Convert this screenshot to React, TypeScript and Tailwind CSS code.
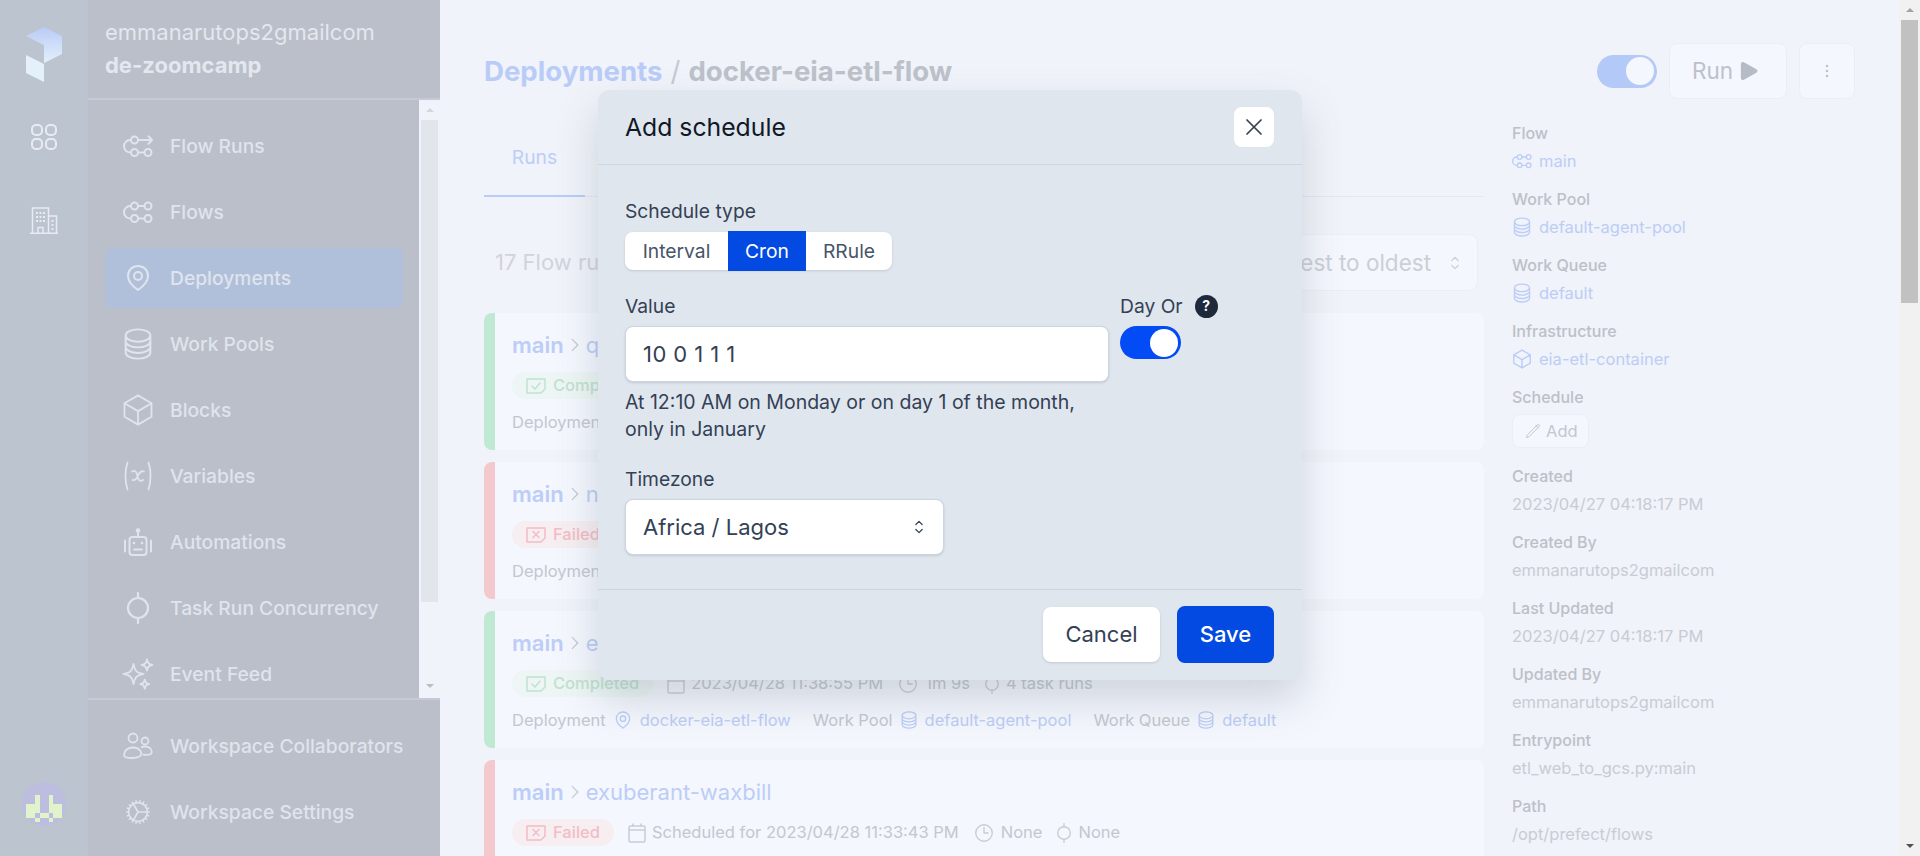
import type { ReactNode } from 'react';
import {
  HiOutlineCircleStack,
  HiOutlineCube,
  HiOutlineSparkles,
  HiOutlineCog,
  HiOutlineClock,
  HiOutlinePencil,
  HiOutlineXMark,
  HiOutlineChevronUpDown,
  HiOutlineChevronRight,
  HiPlay,
  HiEllipsisVertical,
} from 'react-icons/hi2';

type IconProps = { className?: string };

function FlowIcon({ className, run }: IconProps & { run?: boolean }) {
  return (
    <svg viewBox="0 0 30 24" fill="none" stroke="currentColor" strokeWidth="2" strokeLinecap="round" strokeLinejoin="round" className={className}>
      <circle cx="11.500" cy="6" r="3.500" />
      <circle cx="11.500" cy="18.500" r="3.500" />
      <circle cx="25" cy="18.500" r="3.500" />
      {run ? (
        <path d="M15 6h14M25.500 2.200 29 6l-3.500 3.800" />
      ) : (
        <>
          <circle cx="25" cy="6" r="3.500" />
          <path d="M15 6h6.500" />
        </>
      )}
      <path d="M15 18.500h6.500M8 6H7a6 6.250 0 0 0 0 12.500h1" />
    </svg>
  );
}

function PinIcon({ className }: IconProps) {
  return (
    <svg viewBox="0 0 24 28" fill="none" stroke="currentColor" strokeWidth="2" strokeLinejoin="round" className={className}>
      <path d="M12 2C6.200 2 2 6.200 2 12c0 5.500 5 10.500 10 14 5-3.500 10-8.500 10-14 0-5.800-4.200-10-10-10Z" />
      <circle cx="12" cy="12" r="4" />
    </svg>
  );
}

function VariableIcon({ className }: IconProps) {
  return (
    <svg viewBox="0 0 30 30" fill="none" stroke="currentColor" strokeWidth="1.800" strokeLinecap="round" className={className}>
      <path d="M4.500 1.500C1.800 9 1.800 21 4.500 28.500M25.500 1.500C28.200 9 28.200 21 25.500 28.500" />
      <path d="M9 10.500c2.500-1.500 4-.5 4.700 2l1.500 5c.7 2.400 2.300 3 5 1.500M21 10.500c-2.200-.8-4 0-5.500 3l-1.500 3c-1.300 2.600-2.800 3.200-4.500 2.500" />
    </svg>
  );
}

function RobotIcon({ className }: IconProps) {
  return (
    <svg viewBox="0 0 28 28" fill="none" stroke="currentColor" strokeWidth="2" strokeLinecap="round" strokeLinejoin="round" className={className}>
      <circle cx="14" cy="2.500" r="2.300" fill="currentColor" stroke="none" />
      <path d="M14 4v5" />
      <rect x="5.500" y="9" width="17" height="18" rx="3" />
      <path d="M1 12.500v11M27 12.500v11M10 21.500h8" />
      <circle cx="10" cy="15" r="1.300" fill="currentColor" stroke="none" />
      <circle cx="18" cy="15" r="1.300" fill="currentColor" stroke="none" />
    </svg>
  );
}

function ConcurrencyIcon({ className }: IconProps) {
  return (
    <svg viewBox="0 0 24 32" fill="none" stroke="currentColor" strokeWidth="2.200" strokeLinecap="round" className={className}>
      <circle cx="12" cy="16" r="10" />
      <path d="M12 1v5M12 26v5" />
    </svg>
  );
}

function UsersIcon({ className }: IconProps) {
  return (
    <svg viewBox="0 0 30 28" fill="none" stroke="currentColor" strokeWidth="1.800" strokeLinejoin="round" className={className}>
      <circle cx="10" cy="6" r="4.500" />
      <circle cx="22" cy="9" r="3.500" />
      <path d="M1 23c0-4.500 4-7.500 9-7.500 3.500 0 6 1.200 7.500 3.500 1 1.500 1 4.500-1 5.500-2 1-5 1.500-7.500 1.500C4 26 1 25.500 1 23Z" />
      <path d="M18 15.500c1.300-.8 2.700-1 4-1 3.800 0 6.800 2.200 6.800 5.500 0 2-2.300 2.800-5 2.800-1.300 0-2.800-.1-4.300-.5" />
    </svg>
  );
}

function BuildingIcon({ className }: IconProps) {
  return (
    <svg viewBox="0 0 28 27" fill="none" stroke="currentColor" strokeWidth="1.500" className={className}>
      <path d="M0 26.200h28M2.500 26V1h16v25M18.500 9h8v17" />
      <path d="M8 26v-5.500h5V26" />
      <g fill="currentColor" stroke="none">
        <rect x="6" y="5" width="2" height="2" />
        <rect x="9.500" y="5" width="2" height="2" />
        <rect x="13" y="5" width="2" height="2" />
        <rect x="6" y="9" width="2" height="2" />
        <rect x="9.500" y="9" width="2" height="2" />
        <rect x="13" y="9" width="2" height="2" />
        <rect x="6" y="13" width="2" height="2" />
        <rect x="9.500" y="13" width="2" height="2" />
        <rect x="13" y="13" width="2" height="2" />
        <rect x="21.500" y="13" width="2" height="2" />
        <rect x="21.500" y="17" width="2" height="2" />
        <rect x="21.500" y="21" width="2" height="2" />
      </g>
    </svg>
  );
}

function CalendarIcon({ className }: IconProps) {
  return (
    <svg viewBox="0 0 18 20" fill="none" stroke="currentColor" strokeWidth="1.500" strokeLinecap="round" className={className}>
      <rect x="1" y="3" width="16" height="16" rx="1.500" />
      <path d="M1 7h16M5 1v2M13 1v2" />
    </svg>
  );
}

function BadgeIcon({ className, failed }: IconProps & { failed?: boolean }) {
  return (
    <svg viewBox="0 0 20 16" fill="none" stroke="currentColor" strokeWidth="1.500" strokeLinecap="round" strokeLinejoin="round" className={className}>
      <path d="M1 1h18v10l-4 4H1Z" />
      {failed ? <path d="m7 4.500 6 6M13 4.500l-6 6" /> : <path d="m6 8 3 3 5-6" />}
    </svg>
  );
}

function Logo() {
  return (
    <svg viewBox="0 0 36 56" className="w-9 h-14">
      <defs>
        <linearGradient id="logoTop" x1="0" y1="0" x2="0" y2="1">
          <stop offset="0" stopColor="#b9cbf7" />
          <stop offset="1" stopColor="#e4f0fb" />
        </linearGradient>
      </defs>
      <polygon points="0,9 18,0 36,9 36,27 18,36 18,18" fill="url(#logoTop)" />
      <polygon points="0,28 18,37 18,55 0,46" fill="#e4f1fb" />
    </svg>
  );
}

const avatarCells = [
  [2, 0], [5, 0], [2, 1], [5, 1],
  [0, 2], [1, 2], [2, 2], [5, 2], [6, 2], [7, 2],
  [0, 3], [1, 3], [2, 3], [5, 3], [6, 3], [7, 3],
  [0, 4], [1, 4], [3, 4], [4, 4], [6, 4], [7, 4],
  [2, 5], [5, 5],
];

function Avatar() {
  return (
    <div className="w-11 h-11 rounded-full bg-[#bcbddf] flex justify-center pt-[13px]">
      <svg viewBox="0 0 8 6" className="w-9 h-[27px]" shapeRendering="crispEdges">
        {avatarCells.map(([x, y]) => (
          <rect key={`${x}-${y}`} x={x} y={y} width="1" height="1" fill="#e0f3cb" />
        ))}
      </svg>
    </div>
  );
}

function NavItem({ icon, label, active }: { icon: ReactNode; label: string; active?: boolean }) {
  return (
    <div className={`flex flex-none items-center h-[60px] rounded-lg pl-[18px] ${active ? 'bg-[#b1c0da]' : ''}`}>
      <span className="w-[30px] h-[30px] flex items-center justify-center text-[#dfe4ed]">{icon}</span>
      <span className="ml-[17px] text-[19.25px] leading-7 font-medium text-[#dfe4ed] whitespace-nowrap">{label}</span>
    </div>
  );
}

function Sidebar() {
  return (
    <div className="flex flex-none w-[440px] h-full">
      <div className="w-[88px] flex flex-col items-center bg-[#bcc4d0]">
        <div className="mt-[27px]"><Logo /></div>
        <svg viewBox="0 0 26 26" fill="none" stroke="#e8ecf2" strokeWidth="2" className="w-[26px] h-[26px] mt-[41px]">
          <rect x="1" y="1" width="10" height="10" rx="4" />
          <rect x="15" y="1" width="10" height="10" rx="4" />
          <rect x="1" y="15" width="10" height="10" rx="4" />
          <rect x="15" y="15" width="10" height="10" rx="4" />
        </svg>
        <BuildingIcon className="w-7 h-[27px] mt-[57px] text-[#e8ecf2]" />
        <div className="mt-auto mb-[30px]"><Avatar /></div>
      </div>
      <div className="flex-1 flex flex-col bg-[#bbbfc9] min-w-0">
        <div className="h-[100px] flex-none border-b-2 border-[#c5cad6] pl-[17px] pt-[16px]">
          <div className="text-[22px] leading-[33px] text-[#e3e7ef]">emmanarutops2gmailcom</div>
          <div className="text-[22px] leading-[33px] font-bold text-[#e3e7ef]">de-zoomcamp</div>
        </div>
        <div className="flex flex-1 min-h-0 overflow-hidden">
          <div className="flex-1 flex flex-col gap-[6px] pl-[17px] pr-4 pt-[16px] overflow-hidden">
            <NavItem icon={<FlowIcon run className="w-[30px] h-6" />} label="Flow Runs" />
            <NavItem icon={<FlowIcon className="w-[30px] h-6" />} label="Flows" />
            <NavItem active icon={<PinIcon className="w-6 h-7" />} label="Deployments" />
            <NavItem icon={<HiOutlineCircleStack className="flex-none w-9 h-9 stroke-[1.300]" />} label="Work Pools" />
            <NavItem icon={<HiOutlineCube className="flex-none w-9 h-9 stroke-[1.200]" />} label="Blocks" />
            <NavItem icon={<VariableIcon className="w-[30px] h-[30px]" />} label="Variables" />
            <NavItem icon={<RobotIcon className="w-7 h-7" />} label="Automations" />
            <NavItem icon={<ConcurrencyIcon className="w-6 h-8" />} label="Task Run Concurrency" />
            <NavItem icon={<HiOutlineSparkles className="flex-none w-9 h-9 stroke-[1.200]" />} label="Event Feed" />
          </div>
          <div className="w-[21px] flex-none flex flex-col items-center bg-[#f0f3f9]">
            <div className="h-[20px] flex items-center justify-center">
              <div className="border-x-[4px] border-b-[4px] border-x-transparent border-b-[#d3d7dd]" />
            </div>
            <div className="w-[17px] h-[482px] bg-[#e1e5ec]" />
            <div className="mt-auto h-[14px] flex items-start justify-center">
              <div className="border-x-[4px] border-t-[4px] border-x-transparent border-t-[#b9bec6]" />
            </div>
          </div>
        </div>
        <div className="h-[158px] flex-none border-t-2 border-[#c5cad6] pl-[17px] pr-4 pt-[16px] flex flex-col gap-[6px]">
          <NavItem icon={<UsersIcon className="w-[30px] h-7" />} label="Workspace Collaborators" />
          <NavItem icon={<HiOutlineCog className="w-8 h-8 stroke-[1.300]" />} label="Workspace Settings" />
        </div>
      </div>
    </div>
  );
}

function Meta({ icon, text }: { icon: ReactNode; text: string }) {
  return (
    <span className="flex items-center gap-[6px] text-[16.5px] text-[#c3c7cf] whitespace-nowrap">
      <span className="text-[#c9cdd5]">{icon}</span>
      {text}
    </span>
  );
}

function RunCard({ name, failed, time, duration, tasks }: { name: string; failed?: boolean; time: string; duration: string; tasks: string }) {
  return (
    <div className="flex h-[137px] flex-none rounded-lg overflow-hidden bg-[#f4f7fd]">
      <div className={`w-[11px] flex-none ${failed ? 'bg-[#f4c9cd]' : 'bg-[#bfe9d3]'}`} />
      <div className="pl-[17px] pt-[18px]">
        <div className="flex items-center h-7 text-[22px] leading-7 text-[#bccdf7] whitespace-nowrap">
          <span className="font-semibold">main</span>
          <HiOutlineChevronRight className="w-[18px] h-[22px] mx-[2px] text-[#c3c7cf]" />
          <span>{name}</span>
        </div>
        <div className="flex items-center mt-[13px] gap-[14px]">
          <span className={`flex items-center h-[27px] rounded-full pl-[14px] pr-[14px] gap-[7px] text-[16.5px] font-medium ${failed ? 'bg-[#f6eef0] text-[#f4bcc6]' : 'bg-[#edf6f4] text-[#bfe3cf]'}`}>
            <BadgeIcon failed={failed} className="w-5 h-4" />
            {failed ? 'Failed' : 'Completed'}
          </span>
          <Meta icon={<CalendarIcon className="w-[18px] h-5" />} text={time} />
          <Meta icon={<HiOutlineClock className="w-[22px] h-[22px]" />} text={duration} />
          <Meta icon={<ConcurrencyIcon className="w-4 h-5" />} text={tasks} />
        </div>
        <div className="flex items-center mt-[11px] text-[16.5px] text-[#c3c7cf] whitespace-nowrap">
          <span>Deployment</span>
          <PinIcon className="w-4 h-5 mx-[9px] text-[#bccdf7]" />
          <span className="text-[#bccdf7]">docker-eia-etl-flow</span>
          <span className="ml-[22px]">Work Pool</span>
          <HiOutlineCircleStack className="w-5 h-5 mx-[6px] text-[#bccdf7]" />
          <span className="text-[#bccdf7]">default-agent-pool</span>
          <span className="ml-[22px]">Work Queue</span>
          <HiOutlineCircleStack className="w-5 h-5 mx-[6px] text-[#bccdf7]" />
          <span className="text-[#bccdf7]">default</span>
        </div>
      </div>
    </div>
  );
}

function DetailItem({ label, children }: { label: string; children: ReactNode }) {
  return (
    <div className="h-[66px] flex-none">
      <div className="text-base leading-7 font-medium text-[#bcc0c8]">{label}</div>
      <div className="text-[16.5px] leading-7 text-[#c8ccd4] whitespace-nowrap">{children}</div>
    </div>
  );
}

function LinkValue({ icon, text }: { icon: ReactNode; text: string }) {
  return (
    <span className="flex items-center gap-[7px] text-[#bccdf7]">
      <span className="w-5 flex justify-center">{icon}</span>
      {text}
    </span>
  );
}

function Details() {
  return (
    <div className="w-[387px] flex-none pl-7 pr-4 pt-[26px] flex flex-col">
      <div className="flex-none flex items-center justify-end w-[343px] h-14 -mt-[26px] mb-[20px] gap-3">
        <div className="w-[60px] h-[33px] rounded-full bg-[#b3c9f8] flex items-center justify-end pr-[3px]">
          <div className="w-7 h-7 rounded-full bg-[#f4f7fd]" />
        </div>
        <div className="w-[118px] h-14 rounded-lg border border-[#ebeef4] bg-[#f4f7fd] flex items-center pl-[22px] gap-[3px] text-[22.5px] text-[#bcc1ca]">
          Run <HiPlay className="w-[26px] h-[26px] text-[#b6bcc6]" />
        </div>
        <div className="w-[56px] h-14 rounded-lg border border-[#ebeef4] bg-[#f4f7fd] flex items-center justify-center">
          <HiEllipsisVertical className="w-5 h-5 text-[#bcc1ca]" />
        </div>
      </div>
      <DetailItem label="Flow"><LinkValue icon={<FlowIcon className="w-5 h-4" />} text="main" /></DetailItem>
      <DetailItem label="Work Pool"><LinkValue icon={<HiOutlineCircleStack className="flex-none w-[22px] h-[22px]" />} text="default-agent-pool" /></DetailItem>
      <DetailItem label="Work Queue"><LinkValue icon={<HiOutlineCircleStack className="flex-none w-[22px] h-[22px]" />} text="default" /></DetailItem>
      <DetailItem label="Infrastructure"><LinkValue icon={<HiOutlineCube className="flex-none w-[22px] h-[22px]" />} text="eia-etl-container" /></DetailItem>
      <div className="h-[79px] flex-none">
        <div className="text-base leading-7 font-medium text-[#bcc0c8]">Schedule</div>
        <div className="flex items-center mt-[3px] w-[77px] h-[34px] rounded-lg border border-[#ebeef4] bg-[#f4f7fd] pl-3 gap-[5px] text-[16.5px] text-[#c3c7cf]">
          <HiOutlinePencil className="w-4 h-4" /> Add
        </div>
      </div>
      <DetailItem label="Created">2023/04/27 04:18:17 PM</DetailItem>
      <DetailItem label="Created By">emmanarutops2gmailcom</DetailItem>
      <DetailItem label="Last Updated">2023/04/27 04:18:17 PM</DetailItem>
      <DetailItem label="Updated By">emmanarutops2gmailcom</DetailItem>
      <DetailItem label="Entrypoint">etl_web_to_gcs.py:main</DetailItem>
      <DetailItem label="Path">/opt/prefect/flows</DetailItem>
    </div>
  );
}

function ScheduleModal() {
  return (
    <div className="absolute left-[598px] top-[90px] w-[704px] h-[590px] rounded-xl bg-[#e0e6ee] shadow-[0_20px_40px_rgba(100,110,130,0.25)] flex flex-col text-[#334155]">
      <div className="h-[75px] flex-none border-b border-[#cbd5e3] flex items-center justify-between pl-[27px] pr-7">
        <h2 className="text-[24.75px] pt-[2px] text-[#111827]">Add schedule</h2>
        <button className="w-10 h-10 rounded-lg bg-white flex items-center justify-center text-[#374151]">
          <HiOutlineXMark className="w-7 h-7" />
        </button>
      </div>
      <div className="flex-1 pl-[27px] pr-7 pt-[33px]">
        <div className="text-[19.25px] leading-[26px]">Schedule type</div>
        <div className="flex mt-[8px] h-[38px] w-[267px] rounded-lg bg-white shadow-sm text-[19.25px] leading-[36px] text-[#475569]">
          <span className="w-[103px] flex items-center justify-center">Interval</span>
          <span className="w-[78px] -my-px flex items-center justify-center bg-[#024ae2] text-white">Cron</span>
          <span className="w-[86px] flex items-center justify-center">RRule</span>
        </div>
        <div className="flex mt-[23px] gap-[11px]">
          <div className="w-[484px]">
            <div className="text-[19.25px] leading-[26px]">Value</div>
            <div className="mt-[7px] h-[56px] rounded-lg bg-white border border-[#cbd5e3] shadow-sm flex items-center pl-[17px] text-[22px] tracking-[0.02em] text-[#334155]">10 0 1 1 1</div>
            <p className="mt-[7px] text-[19.5px] leading-[27px]">At 12:10 AM on Monday or on day 1 of the month, only in January</p>
          </div>
          <div>
            <div className="flex items-center h-[26px] text-[19.25px]">
              Day Or
              <span className="ml-3 w-[23px] h-[23px] rounded-full bg-[#1e293b] text-white text-sm font-bold flex items-center justify-center">?</span>
            </div>
            <div className="mt-[7px] w-[61px] h-[33px] rounded-full bg-[#024bf5] flex items-center justify-end pr-[3px]">
              <div className="w-7 h-7 rounded-full bg-white" />
            </div>
          </div>
        </div>
        <div className="mt-[23px] text-[19.25px] leading-[26px]">Timezone</div>
        <div className="mt-[7px] w-[319px] h-[56px] rounded-lg bg-white border border-[#cbd5e3] shadow-sm flex items-center justify-between pl-[17px] pr-[14px] text-[22px] text-[#334155]">
          Africa / Lagos
          <HiOutlineChevronUpDown className="w-5 h-5" />
        </div>
      </div>
      <div className="h-[91px] flex-none border-t border-[#cbd5e3] flex items-start justify-end gap-[17px] pr-7 pt-[16px]">
        <button className="w-[117px] h-[55px] mt-px rounded-lg bg-white shadow-sm text-[22px] text-[#334155]">Cancel</button>
        <button className="w-[97px] h-[57px] rounded-lg bg-[#024ae2] text-[22px] font-medium text-white">Save</button>
      </div>
    </div>
  );
}

export default function App() {
  return (
    <div className="relative flex w-[1920px] h-[856px] overflow-hidden bg-[#f0f3f9] font-[Inter,sans-serif]">
      <Sidebar />
      <div className="flex-none w-[1459px] flex pl-11 pt-[43px]">
        <div className="w-[1000px] flex-none flex flex-col">
          <div className="h-14 flex-none flex items-center pt-px text-[27.6px] font-bold whitespace-nowrap">
            <span className="text-[#b9ccf8]">Deployments</span>
            <span className="mx-2 font-normal text-[#c4c9d2]">/</span>
            <span className="text-[#bcc1ca]">docker-eia-etl-flow</span>
          </div>
          <div className="mt-[19px] h-[79px] flex-none border-b border-[#e4e8ef] flex items-end">
            <div className="w-[101px] h-[79px] -mb-px pt-[2px] border-b-2 border-[#b9ccf8] flex items-center justify-center text-[19.25px] text-[#bccdf7]">Runs</div>
          </div>
          <div className="mt-[37px] h-[57px] flex-none flex items-center justify-between pl-[11px]">
            <span className="text-[22px] text-[#d0d4db]">17 Flow runs</span>
            <div className="h-[57px] w-[290px] mr-[6px] rounded-lg border border-[#ebeef4] bg-[#f4f7fd] flex items-center justify-end pr-[12px] gap-[14px] text-[22.5px] text-[#cbcfd6] whitespace-nowrap">
              Newest to oldest
              <HiOutlineChevronUpDown className="w-5 h-5" />
            </div>
          </div>
          <div className="mt-[22px] flex flex-col gap-3">
            <RunCard name="quixotic-pig" time="2023/04/28 11:50:12 PM" duration="1m 9s" tasks="4 task runs" />
            <RunCard name="nimble-moth" failed time="2023/04/28 11:42:10 PM" duration="None" tasks="None" />
            <RunCard name="elated-otter" time="2023/04/28 11:38:55 PM" duration="1m 9s" tasks="4 task runs" />
            <RunCard name="exuberant-waxbill" failed time="Scheduled for 2023/04/28 11:33:43 PM" duration="None" tasks="None" />
          </div>
        </div>
        <div className="-mt-[43px] pt-[43px]"><Details /></div>
      </div>
      <div className="w-[21px] flex-none flex flex-col items-center bg-[#f1f1f1]">
        <div className="h-[20px] flex items-center justify-center">
          <div className="border-x-[4px] border-b-[4px] border-x-transparent border-b-[#a3a3a3]" />
        </div>
        <div className="w-[17px] h-[283px] bg-[#c1c1c1]" />
        <div className="mt-auto h-[12px] flex items-start justify-center">
          <div className="border-x-[4px] border-t-[4px] border-x-transparent border-t-[#505050]" />
        </div>
      </div>
      <ScheduleModal />
    </div>
  );
}
